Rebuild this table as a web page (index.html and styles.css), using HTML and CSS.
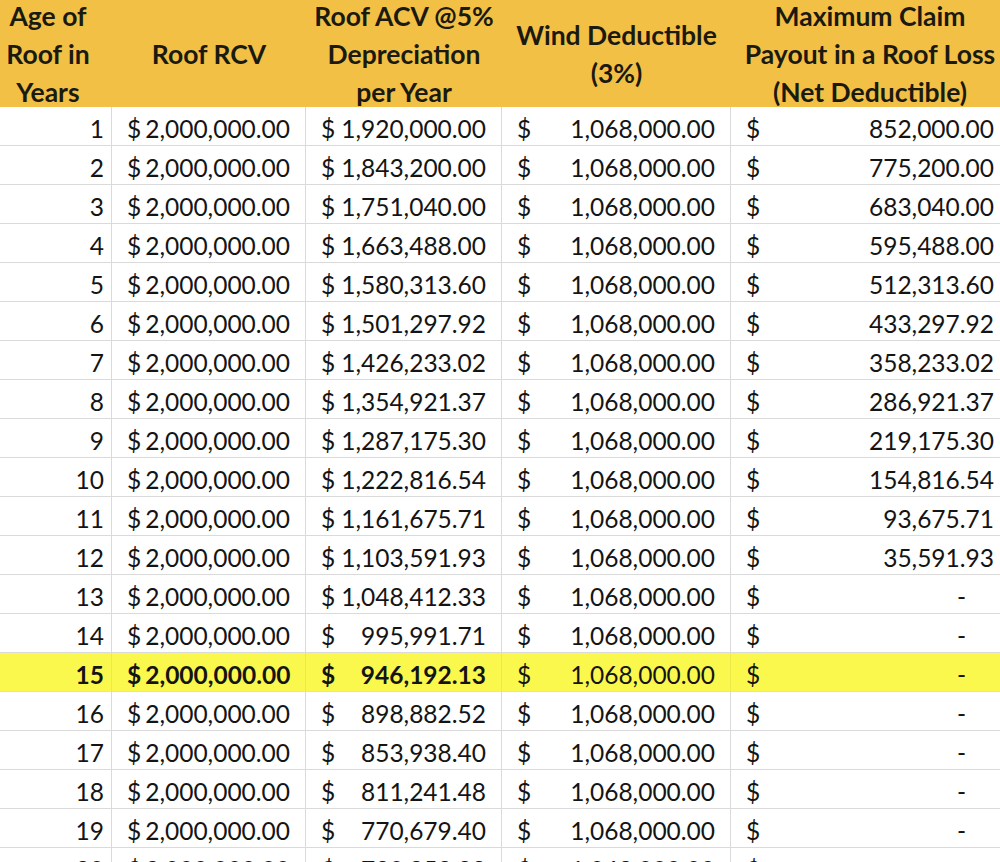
FILE: index.html
```html
<!DOCTYPE html>
<html lang="en">
<head>
<meta charset="utf-8">
<title>Roof Depreciation Table</title>
<link rel="stylesheet" href="styles.css">
</head>
<body>
<table class="sheet">
  <colgroup>
    <col class="c-age"><col class="c-rcv"><col class="c-acv"><col class="c-wind"><col class="c-max">
  </colgroup>
  <thead>
    <tr>
      <th><div class="hd">Age of<br>Roof in<br>Years</div></th>
      <th><div class="hd">Roof RCV</div></th>
      <th><div class="hd">Roof ACV @5%<br>Depreciation<br>per Year</div></th>
      <th><div class="hd">Wind Deductible<br>(3%)</div></th>
      <th><div class="hd">Maximum Claim<br>Payout in a Roof Loss<br>(Net Deductible)</div></th>
    </tr>
  </thead>
  <tbody>
    <tr><td class="age">1</td><td class="money tight"><span class="cur">$</span>2,000,000.00</td><td class="money tight"><span class="cur">$</span>1,920,000.00</td><td class="money"><span class="cur">$</span>1,068,000.00</td><td class="money"><span class="cur">$</span>852,000.00</td></tr>
    <tr><td class="age">2</td><td class="money tight"><span class="cur">$</span>2,000,000.00</td><td class="money tight"><span class="cur">$</span>1,843,200.00</td><td class="money"><span class="cur">$</span>1,068,000.00</td><td class="money"><span class="cur">$</span>775,200.00</td></tr>
    <tr><td class="age">3</td><td class="money tight"><span class="cur">$</span>2,000,000.00</td><td class="money tight"><span class="cur">$</span>1,751,040.00</td><td class="money"><span class="cur">$</span>1,068,000.00</td><td class="money"><span class="cur">$</span>683,040.00</td></tr>
    <tr><td class="age">4</td><td class="money tight"><span class="cur">$</span>2,000,000.00</td><td class="money tight"><span class="cur">$</span>1,663,488.00</td><td class="money"><span class="cur">$</span>1,068,000.00</td><td class="money"><span class="cur">$</span>595,488.00</td></tr>
    <tr><td class="age">5</td><td class="money tight"><span class="cur">$</span>2,000,000.00</td><td class="money tight"><span class="cur">$</span>1,580,313.60</td><td class="money"><span class="cur">$</span>1,068,000.00</td><td class="money"><span class="cur">$</span>512,313.60</td></tr>
    <tr><td class="age">6</td><td class="money tight"><span class="cur">$</span>2,000,000.00</td><td class="money tight"><span class="cur">$</span>1,501,297.92</td><td class="money"><span class="cur">$</span>1,068,000.00</td><td class="money"><span class="cur">$</span>433,297.92</td></tr>
    <tr><td class="age">7</td><td class="money tight"><span class="cur">$</span>2,000,000.00</td><td class="money tight"><span class="cur">$</span>1,426,233.02</td><td class="money"><span class="cur">$</span>1,068,000.00</td><td class="money"><span class="cur">$</span>358,233.02</td></tr>
    <tr><td class="age">8</td><td class="money tight"><span class="cur">$</span>2,000,000.00</td><td class="money tight"><span class="cur">$</span>1,354,921.37</td><td class="money"><span class="cur">$</span>1,068,000.00</td><td class="money"><span class="cur">$</span>286,921.37</td></tr>
    <tr><td class="age">9</td><td class="money tight"><span class="cur">$</span>2,000,000.00</td><td class="money tight"><span class="cur">$</span>1,287,175.30</td><td class="money"><span class="cur">$</span>1,068,000.00</td><td class="money"><span class="cur">$</span>219,175.30</td></tr>
    <tr><td class="age">10</td><td class="money tight"><span class="cur">$</span>2,000,000.00</td><td class="money tight"><span class="cur">$</span>1,222,816.54</td><td class="money"><span class="cur">$</span>1,068,000.00</td><td class="money"><span class="cur">$</span>154,816.54</td></tr>
    <tr><td class="age">11</td><td class="money tight"><span class="cur">$</span>2,000,000.00</td><td class="money tight"><span class="cur">$</span>1,161,675.71</td><td class="money"><span class="cur">$</span>1,068,000.00</td><td class="money"><span class="cur">$</span>93,675.71</td></tr>
    <tr><td class="age">12</td><td class="money tight"><span class="cur">$</span>2,000,000.00</td><td class="money tight"><span class="cur">$</span>1,103,591.93</td><td class="money"><span class="cur">$</span>1,068,000.00</td><td class="money"><span class="cur">$</span>35,591.93</td></tr>
    <tr><td class="age">13</td><td class="money tight"><span class="cur">$</span>2,000,000.00</td><td class="money tight"><span class="cur">$</span>1,048,412.33</td><td class="money"><span class="cur">$</span>1,068,000.00</td><td class="money"><span class="cur">$</span><span class="dash">-</span></td></tr>
    <tr><td class="age">14</td><td class="money tight"><span class="cur">$</span>2,000,000.00</td><td class="money"><span class="cur">$</span>995,991.71</td><td class="money"><span class="cur">$</span>1,068,000.00</td><td class="money"><span class="cur">$</span><span class="dash">-</span></td></tr>
    <tr class="hl"><td class="age strong">15</td><td class="money tight strong"><span class="cur">$</span>2,000,000.00</td><td class="money strong"><span class="cur">$</span>946,192.13</td><td class="money"><span class="cur">$</span>1,068,000.00</td><td class="money"><span class="cur">$</span><span class="dash">-</span></td></tr>
    <tr><td class="age">16</td><td class="money tight"><span class="cur">$</span>2,000,000.00</td><td class="money"><span class="cur">$</span>898,882.52</td><td class="money"><span class="cur">$</span>1,068,000.00</td><td class="money"><span class="cur">$</span><span class="dash">-</span></td></tr>
    <tr><td class="age">17</td><td class="money tight"><span class="cur">$</span>2,000,000.00</td><td class="money"><span class="cur">$</span>853,938.40</td><td class="money"><span class="cur">$</span>1,068,000.00</td><td class="money"><span class="cur">$</span><span class="dash">-</span></td></tr>
    <tr><td class="age">18</td><td class="money tight"><span class="cur">$</span>2,000,000.00</td><td class="money"><span class="cur">$</span>811,241.48</td><td class="money"><span class="cur">$</span>1,068,000.00</td><td class="money"><span class="cur">$</span><span class="dash">-</span></td></tr>
    <tr><td class="age">19</td><td class="money tight"><span class="cur">$</span>2,000,000.00</td><td class="money"><span class="cur">$</span>770,679.40</td><td class="money"><span class="cur">$</span>1,068,000.00</td><td class="money"><span class="cur">$</span><span class="dash">-</span></td></tr>
    <tr><td class="age">20</td><td class="money tight"><span class="cur">$</span>2,000,000.00</td><td class="money"><span class="cur">$</span>739,852.22</td><td class="money"><span class="cur">$</span>1,068,000.00</td><td class="money"><span class="cur">$</span><span class="dash">-</span></td></tr>
  </tbody>
</table>
</body>
</html>
```
FILE: styles.css
```css
html, body {
  margin: 0;
  padding: 0;
  background: #ffffff;
  overflow: hidden;
}

.sheet {
  margin-left: -16px;
  width: 1025px;
  table-layout: fixed;
  border-collapse: separate;
  border-spacing: 0;
  font-family: Lato, "Open Sans", sans-serif;
  font-size: 24.5px;
  color: #141414;
}

.c-age { width: 128px; }
.c-rcv { width: 194px; }
.c-acv { width: 196px; }
.c-wind { width: 229px; }
.c-max { width: 278px; }

.sheet th {
  padding: 0;
  background: #f3c046;
  font-weight: 700;
  font-size: 26.5px;
  vertical-align: middle;
}

.hd {
  height: 107px;
  display: flex;
  align-items: center;
  justify-content: center;
  text-align: center;
  line-height: 38px;
  white-space: nowrap;
  color: #1a1a10;
}

.sheet tbody tr {
  height: 39px;
}

.sheet td {
  padding: 8px 15px 3px 15px;
  line-height: 27px;
  vertical-align: top;
  text-align: right;
  white-space: nowrap;
  border-bottom: 1px solid #dadada;
  border-right: 1px solid #dadada;
}

.sheet td:last-child {
  border-right: none;
}

.sheet td.age {
  padding-right: 7px;
}

.cur {
  float: left;
}

.money.tight .cur {
  margin-right: 4px;
}

.dash {
  display: inline-block;
  margin-right: 28px;
}

.strong {
  font-weight: 700;
}

.sheet tr.hl td {
  background: #fbf84d;
  border-right-color: #ece94c;
  border-bottom-color: #f0ed60;
}
```
